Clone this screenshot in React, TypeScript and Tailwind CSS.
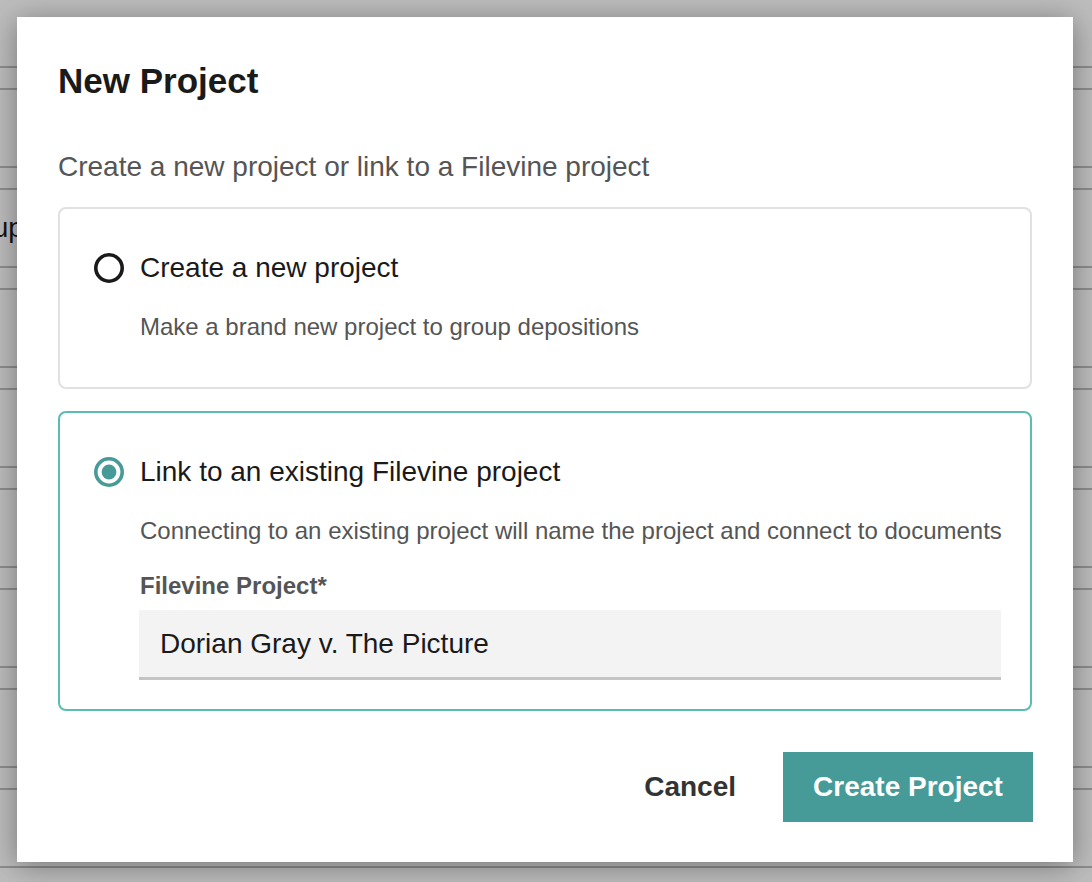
import React from "react";

// ---------------------------------------------------------------------------
// Constants
// ---------------------------------------------------------------------------
const TEAL = "#469b98";
const PAGE_ROWS = [0, 1, 2, 3, 4, 5, 6, 7, 8];

// ---------------------------------------------------------------------------
// Radio glyph
// ---------------------------------------------------------------------------
function RadioDot({ checked }: { checked: boolean }) {
  return (
    <svg width="30" height="30" viewBox="0 0 30 30" className="flex-shrink-0">
      <circle
        cx="15"
        cy="15"
        r="13.2"
        fill="none"
        stroke={checked ? TEAL : "#1a1a1a"}
        strokeWidth="3.6"
      />
      {checked && <circle cx="15" cy="15" r="7.4" fill={TEAL} />}
    </svg>
  );
}

// ---------------------------------------------------------------------------
// Option card
// ---------------------------------------------------------------------------
interface OptionCardProps {
  label: string;
  description: string;
  selected: boolean;
  children?: React.ReactNode;
}

function OptionCard({ label, description, selected, children }: OptionCardProps) {
  return (
    <div
      className={
        selected
          ? "rounded-[8px] border-2 border-[#5bbcb4] pt-[43px] pb-[29px] pl-[34px] pr-[29px]"
          : "rounded-[8px] border-2 border-[#e1e1e1] pt-[43px] pb-[46px] pl-[34px] pr-[29px]"
      }
    >
      <div className="flex items-center gap-4">
        <RadioDot checked={selected} />
        <span className="text-[28px] leading-[32px] text-[#1a1a1a]">{label}</span>
      </div>
      <div className="pl-[46px]">
        <p className="mt-[29px] whitespace-nowrap text-[24px] leading-[28px] text-[#555555]">
          {description}
        </p>
        {children}
      </div>
    </div>
  );
}

// ---------------------------------------------------------------------------
// Page
// ---------------------------------------------------------------------------
export default function App() {
  return (
    <div className="relative h-[882px] w-full overflow-hidden bg-[#bdbdbd] font-[family-name:'Liberation_Sans',Arial,sans-serif]">
      {/* Dimmed list page behind the dialog */}
      <div className="pt-[66px]">
        {PAGE_ROWS.map((i) => (
          <div key={i}>
            <div className="h-[22px] border-t-2 border-[#8d8d8d]" />
            <div className="flex h-[78px] items-center border-t-2 border-[#8d8d8d]">
              {i === 1 && (
                <span className="ml-[-54px] whitespace-nowrap text-[28px] text-[#141414]">
                  Group
                </span>
              )}
            </div>
          </div>
        ))}
      </div>

      {/* Dialog */}
      <div className="absolute left-[17px] top-[17px] h-[845px] w-[1056px] bg-white shadow-[0_4px_28px_rgba(0,0,0,0.38)]">
        <div className="flex h-full flex-col px-[41px] pt-[44px]">
          <h2 className="text-[35px] font-bold leading-[40px] text-[#1a1a1a]">New Project</h2>
          <p className="mt-[50px] text-[28px] leading-[32px] text-[#555555]">
            Create a new project or link to a Filevine project
          </p>

          <div className="mt-[24px] flex flex-col gap-[22px]">
            <OptionCard
              label="Create a new project"
              description="Make a brand new project to group depositions"
              selected={false}
            />
            <OptionCard
              label="Link to an existing Filevine project"
              description="Connecting to an existing project will name the project and connect to documents"
              selected
            >
              <p className="mt-[27px] text-[24px] font-bold leading-[28px] text-[#555555]">
                Filevine Project*
              </p>
              <div className="ml-[-1px] mt-[10px] flex h-[70px] items-center border-b-[3px] border-[#c4c4c4] bg-[#f3f3f3] pl-[21px]">
                <span className="text-[28px] leading-[32px] text-[#1a1a1a]">
                  Dorian Gray v. The Picture
                </span>
              </div>
            </OptionCard>
          </div>

          <div className="mt-[41px] flex items-center justify-end">
            <button className="mr-[47px] text-[28px] font-bold leading-[32px] text-[#333333]">
              Cancel
            </button>
            <button className="mr-[-1px] h-[70px] w-[250px] bg-[#469b98] text-[28px] font-bold leading-[32px] text-white">
              Create Project
            </button>
          </div>
        </div>
      </div>
    </div>
  );
}
